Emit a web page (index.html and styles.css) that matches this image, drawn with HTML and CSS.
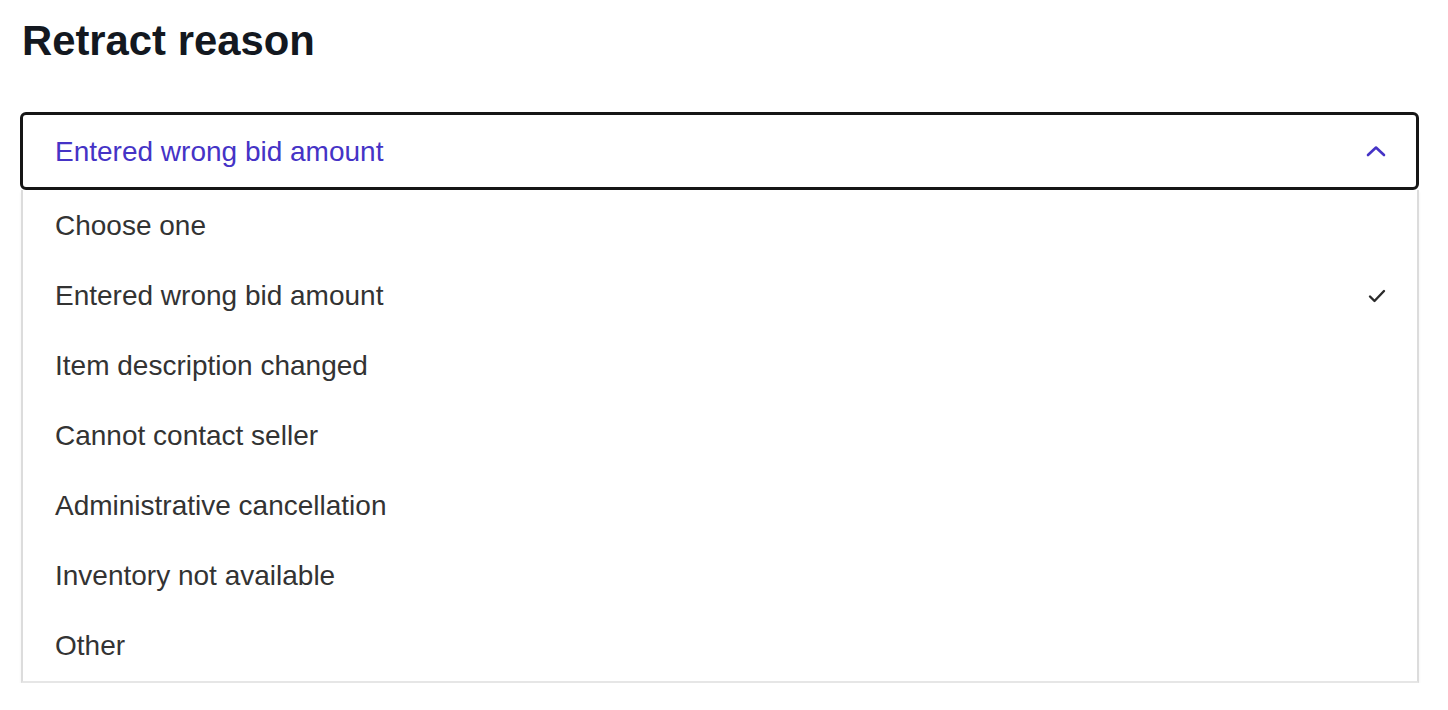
FILE: index.html
```html
<!DOCTYPE html>
<html lang="en">
<head>
<meta charset="utf-8">
<title>Retract reason</title>
<link rel="stylesheet" href="styles.css">
</head>
<body>
<div class="page">
  <h1 class="title">Retract reason</h1>
  <div class="select">
    <div class="trigger">
      <span class="value">Entered wrong bid amount</span>
      <svg class="chevron" width="20" height="12" viewBox="0 0 20 12"><path d="M2 10 L10 2.5 L18 10" fill="none" stroke="#4533c6" stroke-width="2.6" stroke-linecap="round" stroke-linejoin="round"/></svg>
    </div>
    <ul class="listbox">
      <li class="option">Choose one</li>
      <li class="option selected">Entered wrong bid amount
        <svg class="check" width="18" height="14" viewBox="0 0 18 14"><path d="M2 7.5 L6.5 12 L16 2" fill="none" stroke="#2b2b2b" stroke-width="2.4" stroke-linecap="round" stroke-linejoin="round"/></svg>
      </li>
      <li class="option">Item description changed</li>
      <li class="option">Cannot contact seller</li>
      <li class="option">Administrative cancellation</li>
      <li class="option">Inventory not available</li>
      <li class="option">Other</li>
    </ul>
  </div>
</div>
</body>
</html>
```
FILE: styles.css
```css
html, body {
  margin: 0;
  padding: 0;
  background: #ffffff;
}
body {
  font-family: "Liberation Sans", Arial, Helvetica, sans-serif;
}
.page {
  padding: 20px 0 0 20px;
  width: 1399px;
}
.title {
  margin: 0 0 51px 2px;
  font-size: 41.8px;
  line-height: 41px;
  font-weight: 700;
  color: #131820;
}
.select {
  width: 1399px;
}
.trigger {
  height: 78px;
  box-sizing: border-box;
  border: 3px solid #161616;
  border-radius: 6px;
  display: flex;
  align-items: center;
  justify-content: space-between;
  padding: 0 30px 0 32px;
}
.value {
  font-size: 28px;
  color: #4533c6;
  padding-top: 2px;
}
.chevron {
  display: block;
  margin-top: 0;
}
.listbox {
  list-style: none;
  margin: 0 0 0 1px;
  padding: 0;
  width: 1398px;
  box-sizing: border-box;
  border-left: 2px solid #dcdcdc;
  border-right: 2px solid #dcdcdc;
  border-bottom: 2px solid #e6e6e6;
  box-shadow: 0 2px 3px rgba(0, 0, 0, 0.06);
}
.option {
  height: 70px;
  display: flex;
  align-items: center;
  justify-content: space-between;
  padding: 0 31px 0 32px;
  font-size: 28px;
  color: #333333;
}
.option:first-child {
  height: 71px;
}
.check {
  display: block;
}
```
